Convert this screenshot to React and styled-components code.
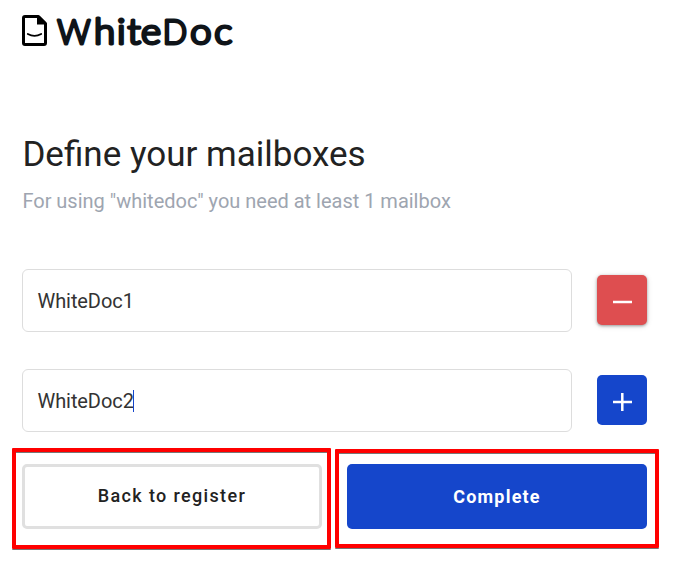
import React from "react";
import styled, { createGlobalStyle, css } from "styled-components";

const GlobalStyle = createGlobalStyle`
  * { box-sizing: border-box; }
  body { margin: 0; background: #fff; }
`;

const Page = styled.main`
  width: 674px;
  height: 564px;
  padding: 13px 27px 0 22px;
  overflow: hidden;
  background: #fff;
  color: #222;
  font-family: Roboto, sans-serif;
`;

const Logo = styled.header`
  display: flex;
  height: 38px;
`;

const LogoMark = styled.svg`
  width: 25px;
  height: 31px;
  margin-top: 2px;
  flex: none;
`;

const Wordmark = styled.svg`
  width: 190px;
  height: 38px;
  margin-left: 6px;
  overflow: visible;

  text {
    font-family: Lato, sans-serif;
    font-weight: 300;
    font-size: 34px;
    fill: #0f1419;
    stroke: #0f1419;
    stroke-width: 3px;
    stroke-linejoin: round;
  }
`;

const Title = styled.h1`
  margin: 83px 0 0;
  padding-left: 0.4px;
  font-size: 35px;
  line-height: 42px;
  font-weight: 400;
`;

const Subtitle = styled.p`
  margin: 13px 0 0;
  padding-left: 0.4px;
  font-size: 20px;
  line-height: 24px;
  letter-spacing: -0.01px;
  color: #9ea5b0;
`;

const Mailboxes = styled.div`
  display: grid;
  row-gap: 37px;
  margin-top: 56px;
`;

const MailboxRow = styled.div`
  display: flex;
  align-items: flex-start;
  justify-content: space-between;
`;

const Field = styled.div`
  display: flex;
  align-items: center;
  width: 550px;
  height: 63px;
  padding: 0 15px 0 14.5px;
  border: 1px solid #ddd;
  border-radius: 6px;
  color: #333;
  font-size: 20px;
  line-height: 24px;
  letter-spacing: -0.08px;
`;

const Caret = styled.span`
  width: 1px;
  height: 22px;
  margin-left: -1px;
  background: #1546cb;
`;

const IconButton = styled.button`
  display: grid;
  place-items: center;
  width: 50px;
  height: 50px;
  margin: 6px 0 0;
  padding: 0;
  border: 0;
  border-radius: 5px;
  background: ${({ $danger }) => ($danger ? "#de4e50" : "#1546cb")};
  box-shadow: ${({ $danger }) =>
    $danger ? "0 1px 3px rgba(0,0,0,.35), 0 1px 6px rgba(0,0,0,.12)" : "none"};
`;

const Actions = styled.div`
  display: flex;
  gap: 25px;
  margin-top: 32px;
`;

const Action = styled.div`
  position: relative;
  width: 300px;
  height: 65px;
`;

const ActionButton = styled.button`
  width: 100%;
  height: 100%;
  margin: 0;
  padding: 0;
  border-radius: 5px;
  font-family: inherit;
  font-size: 18px;
  line-height: 24px;
  ${({ $primary }) =>
    $primary
      ? css`
          border: 0;
          background: #1546cb;
          color: #fff;
          font-weight: 700;
          letter-spacing: 1.2px;
        `
      : css`
          border: 3px solid #e0e0e0;
          background: #fff;
          color: #222;
          font-weight: 500;
          letter-spacing: 1.35px;
          padding-bottom: 2px;
        `}
`;

const Highlight = styled.span`
  position: absolute;
  inset: ${({ $inset }) => $inset};
  border: 4px solid #f00;
  border-radius: 1px;
  box-shadow: 0 1px 0 #777, inset 0 1px 0 #777;
  pointer-events: none;
`;

export default function App() {
  return (
    <Page>
      <GlobalStyle />
      <Logo>
        <LogoMark viewBox="0 0 25 31" aria-hidden="true">
          <path
            d="M3 1.5H16.5L23.5 8.5V28Q23.5 29.5 22 29.5H3Q1.5 29.5 1.5 28V3Q1.5 1.5 3 1.5Z"
            fill="none"
            stroke="#000"
            strokeWidth="3"
            strokeLinejoin="round"
          />
          <path d="M15 1H17.5L24 7.5V9.5H15Z" fill="#000" />
          <path
            d="M5.8 19Q12.5 22.8 19.2 19"
            fill="none"
            stroke="#000"
            strokeWidth="1.8"
            strokeLinecap="round"
          />
        </LogoMark>
        <Wordmark role="img" aria-label="WhiteDoc">
          <text transform="translate(4.3 31.2) scale(.96 1)">W</text>
          <text transform="translate(41 31.2) scale(1.13 1.03)">
            <tspan x="0 20.4 29.7 41.7">hite</tspan>
          </text>
          <text transform="translate(109.7 31.2) scale(.94 1)">D</text>
          <text transform="translate(137.3 31.2) scale(1.12 1.03)">
            <tspan x="0 21.4">oc</tspan>
          </text>
        </Wordmark>
      </Logo>
      <Title>Define your mailboxes</Title>
      <Subtitle>For using "whitedoc" you need at least 1 mailbox</Subtitle>
      <Mailboxes>
        <MailboxRow>
          <Field>WhiteDoc1</Field>
          <IconButton $danger aria-label="Remove mailbox">
            <svg width="50" height="50" aria-hidden="true">
              <path d="M16 27H35" stroke="#fff" strokeWidth="2.5" />
            </svg>
          </IconButton>
        </MailboxRow>
        <MailboxRow>
          <Field>
            WhiteDoc2
            <Caret />
          </Field>
          <IconButton aria-label="Add mailbox">
            <svg width="50" height="50" aria-hidden="true">
              <path d="M16 27H35M25.3 18V36" stroke="#fff" strokeWidth="2.5" />
            </svg>
          </IconButton>
        </MailboxRow>
      </Mailboxes>
      <Actions>
        <Action>
          <ActionButton>Back to register</ActionButton>
          <Highlight $inset="-16px -9px -20px -10px" />
        </Action>
        <Action>
          <ActionButton $primary>Complete</ActionButton>
          <Highlight $inset="-15px -12px -19px -12px" />
        </Action>
      </Actions>
    </Page>
  );
}
